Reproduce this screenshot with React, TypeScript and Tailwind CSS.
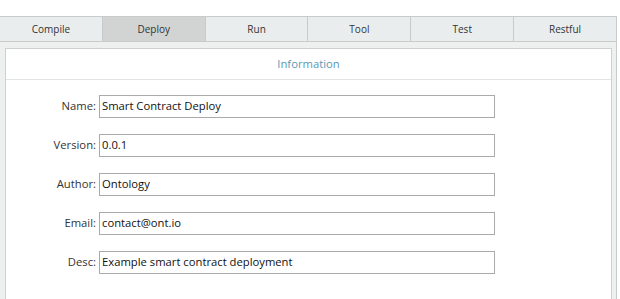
const tabs = ["Compile", "Deploy", "Run", "Tool", "Test", "Restful"]

const fields = [
  { label: "Name:", value: "Smart Contract Deploy" },
  { label: "Version:", value: "0.0.1" },
  { label: "Author:", value: "Ontology" },
  { label: "Email:", value: "contact@ont.io" },
  { label: "Desc:", value: "Example smart contract deployment" },
]

export default function App() {
  return (
    <div className="w-[620px] h-[299px] overflow-hidden bg-white pt-4 font-['Open_Sans',sans-serif] text-[#333]">
      <div className="w-[617px] h-[283px] flex flex-col border-r border-[#c8cbcb]">
        <div className="flex h-[26px] border-y border-[#c8cbcb] bg-[#eaeded]">
          {tabs.map((t, i) => (
            <div
              key={t}
              className={`flex-1 flex items-center justify-center text-[10px] text-[#333] ${
                i < tabs.length - 1 ? "border-r border-[#c8cbcb]" : ""
              } ${t === "Deploy" ? "bg-[#d2d3d3]" : ""}`}
            >
              {t}
            </div>
          ))}
        </div>
        <div className="flex-1 bg-[#eef0f0] pl-[5px] pr-[4px] pt-[6px]">
          <div className="h-full bg-white border-x border-t border-[#cdd0d0]">
            <div className="h-[31px] flex items-center justify-center border-b border-[#e2e4e4] text-[11.25px] text-[#5a9ab5]">
              Information
            </div>
            <div className="flex flex-col gap-4 pt-[15px] text-[11.25px]">
              {fields.map((f) => (
                <div key={f.label} className="flex items-center gap-[3px]">
                  <div className="w-[90px] text-right text-[#333]">{f.label}</div>
                  <div className="w-[396px] h-[23px] border border-[#aaa] flex items-center px-[2px] text-[#111]">
                    {f.value}
                  </div>
                </div>
              ))}
            </div>
          </div>
        </div>
      </div>
    </div>
  )
}
